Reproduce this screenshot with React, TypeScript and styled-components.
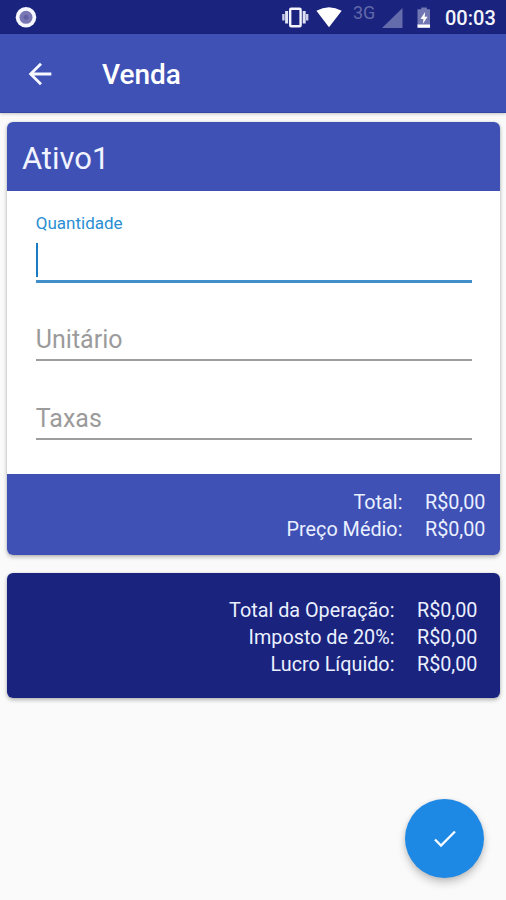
import React from "react";
import styled, { createGlobalStyle } from "styled-components";

const indigo = "#3f51b5";
const navy = "#1a237e";
const blue = "#1e88e5";

const GlobalStyle = createGlobalStyle`
  * { box-sizing: border-box; }
  body { margin: 0; background: #fafafa; font-family: Roboto, sans-serif; }
`;

const Screen = styled.div`
  position: relative;
  display: flex;
  flex-direction: column;
  width: 506px;
  height: 900px;
  overflow: hidden;
  background: #fafafa;
`;

const StatusBar = styled.header`
  display: flex;
  align-items: center;
  justify-content: space-between;
  flex: none;
  height: 34px;
  padding-left: 14px;
  background: ${navy};
`;

const StatusIcons = styled.svg`
  display: block;
  flex: none;
`;

const StatusGroup = styled.div`
  display: flex;
  align-items: center;
  padding-right: 11px;
`;

const Network = styled.span`
  width: 23px;
  margin: 0 6px 9px 11px;
  font-size: 18px;
  line-height: 18px;
  color: #6168a8;
`;

const Clock = styled.time`
  margin: 2px 0 0 15px;
  width: 50px;
  font-size: 20px;
  font-weight: 500;
  line-height: 24px;
  color: #f4f5fc;
`;

const AppBar = styled.div`
  display: flex;
  align-items: center;
  flex: none;
  gap: 45px;
  height: 79px;
  padding: 1px 0 0 23px;
  background: ${indigo};
  border-bottom: 1px solid #3446a5;
  box-shadow: 0 1px 3px rgba(0, 0, 0, 0.22);
`;

const BackIcon = styled.svg`
  display: block;
  width: 34px;
  height: 34px;
`;

const Title = styled.h1`
  margin: 2px 0 0;
  font-size: 28px;
  font-weight: 500;
  line-height: 34px;
  color: #fff;
`;

const Cards = styled.main`
  display: flex;
  flex-direction: column;
  gap: 18px;
  padding: 9px 6.5px 0 7.4px;
`;

const Card = styled.section`
  border-radius: 6px;
  overflow: hidden;
  background: #fff;
  box-shadow: 0 2px 4px rgba(0, 0, 0, 0.28), 0 0 2px rgba(0, 0, 0, 0.12);
`;

const CardHeader = styled.h2`
  margin: 0;
  height: 68.5px;
  padding: 19px 14.5px 0;
  font-size: 31px;
  font-weight: 400;
  line-height: 36px;
  color: #f1f3ff;
  background: ${indigo};
`;

const Form = styled.div`
  height: 283.5px;
  padding: 22px 28px 0 28.4px;
`;

const Field = styled.div<{ $active?: boolean }>`
  height: ${(p) => (p.$active ? "70px" : "79px")};
  padding-top: ${(p) => (p.$active ? "0" : "45px")};
  border-bottom: ${(p) => (p.$active ? `3px solid #408fcb` : "2px solid #9d9d9d")};
  &:nth-child(2) { height: 78px; padding-top: 44px; }
`;

const Label = styled.label<{ $active?: boolean }>`
  display: block;
  font-size: ${(p) => (p.$active ? "17px" : "25px")};
  line-height: ${(p) => (p.$active ? "20px" : "26px")};
  color: ${(p) => (p.$active ? "#2b8ed3" : "#9b9b9b")};
`;

const Caret = styled.div`
  width: 2.5px;
  height: 34px;
  margin-top: 10px;
  background: #1b7bc4;
`;

const Summary = styled.dl<{ $dark?: boolean }>`
  display: grid;
  grid-template-columns: 1fr auto;
  column-gap: 22.5px;
  grid-auto-rows: 27px;
  margin: 0;
  height: ${(p) => (p.$dark ? "125px" : "81px")};
  padding: ${(p) => (p.$dark ? "24px 22px 0 0" : "15px 14px 0 0")};
  background: ${(p) => (p.$dark ? navy : indigo)};
  color: #eaf0ff;
  font-size: 19.8px;
  line-height: 27px;
  text-align: right;
  dt, dd { margin: 0; white-space: nowrap; }
`;

const ConfirmButton = styled.button`
  position: absolute;
  right: 22px;
  bottom: 22px;
  display: flex;
  align-items: center;
  justify-content: center;
  width: 79px;
  height: 79px;
  padding: 0;
  border: 0;
  border-radius: 50%;
  background: ${blue};
  box-shadow: 0 5px 9px rgba(0, 0, 0, 0.2), 0 1px 4px rgba(0, 0, 0, 0.1);
`;

const Row = ({ label, value = "R$0,00" }: { label: string; value?: string }) => (
  <>
    <dt>{label}</dt>
    <dd>{value}</dd>
  </>
);

export default function App() {
  return (
    <Screen>
      <GlobalStyle />
      <StatusBar>
        <StatusIcons width="24" height="34" viewBox="0 0 24 34">
          <circle cx="12" cy="17.3" r="10.3" fill="#f7f7ff" />
          <circle cx="12" cy="17.3" r="6.5" fill="#7877b4" />
          <circle cx="12" cy="17.3" r="2.5" fill="#6260a4" />
        </StatusIcons>
        <StatusGroup>
          <StatusIcons width="60" height="34" viewBox="282 0 60 34">
            <rect x="290.2" y="8.8" width="10.4" height="17.4" rx="1" fill="none" stroke="#f4f5fc" strokeWidth="2.4" />
            <path d="M286.6 11v12.5M304.2 11v12.5" stroke="#dfe2f3" strokeWidth="3" />
            <path d="M283.4 14v6.5M307.2 14v6.5" stroke="#c9cde6" strokeWidth="2.4" />
            <path d="M316.4 10.8Q329 3.6 341.7 10.8L329 27.2Z" fill="#fff" />
          </StatusIcons>
          <Network>3G</Network>
          <StatusIcons width="48" height="34" viewBox="382 0 48 34">
            <path d="M382 28L402.5 8V28Z" fill="#656cac" />
            <path d="M417.5 9.2h3.7V7.4h5.7v1.8h3.7v17h-13.1z" fill="#7077b2" />
            <path d="M417.5 24.5h13.1v3.3h-13.1z" fill="#fff" />
            <path d="M425.1 12l-4.6 7h2.9l-.5 4.7 4.7-7h-2.9z" fill="#fff" />
          </StatusIcons>
          <Clock>00:03</Clock>
        </StatusGroup>
      </StatusBar>
      <AppBar>
        <BackIcon viewBox="0 0 24 24" fill="#f7f8ff">
          <path d="M20 11H7.83l5.59-5.59L12 4l-8 8 8 8 1.41-1.41L7.83 13H20v-2z" />
        </BackIcon>
        <Title>Venda</Title>
      </AppBar>
      <Cards>
        <Card>
          <CardHeader>Ativo1</CardHeader>
          <Form>
            <Field $active>
              <Label $active>Quantidade</Label>
              <Caret />
            </Field>
            <Field>
              <Label>Unitário</Label>
            </Field>
            <Field>
              <Label>Taxas</Label>
            </Field>
          </Form>
          <Summary>
            <Row label="Total:" />
            <Row label="Preço Médio:" />
          </Summary>
        </Card>
        <Card>
          <Summary $dark>
            <Row label="Total da Operação:" />
            <Row label="Imposto de 20%:" />
            <Row label="Lucro Líquido:" />
          </Summary>
        </Card>
      </Cards>
      <ConfirmButton aria-label="Confirmar">
        <svg width="24" height="20" viewBox="0 0 24 20" fill="none">
          <path d="M2 10.5L8 16.5L22 2.5" stroke="#f5fbff" strokeWidth="2.3" />
        </svg>
      </ConfirmButton>
    </Screen>
  );
}
